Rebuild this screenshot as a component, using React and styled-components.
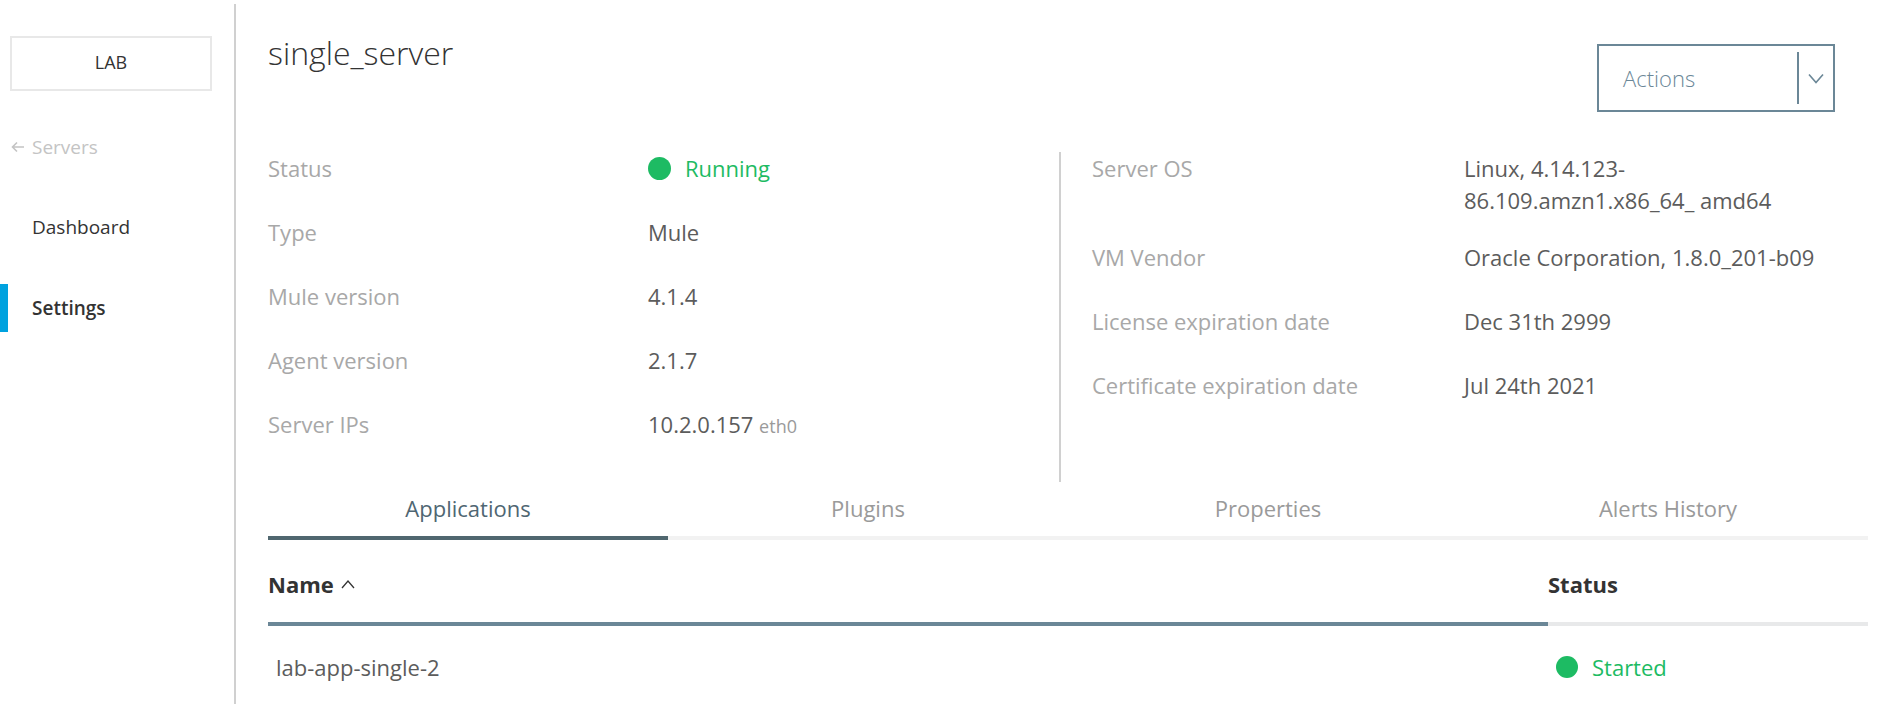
import React from 'react';
import styled, { createGlobalStyle } from 'styled-components';

const GlobalStyle = createGlobalStyle`
  html, body { margin: 0; padding: 0; background: #ffffff; }
  body {
    font-family: "Open Sans", "Liberation Sans", sans-serif;
    color: #333333;
    -webkit-font-smoothing: antialiased;
  }
  * { box-sizing: border-box; }
`;

const GREEN = '#1dbb63';
const SLATE = '#6b8797';

const Layout = styled.div`
  display: flex;
  width: 1886px;
  height: 704px;
  overflow: hidden;
`;

const Sidebar = styled.aside`
  width: 236px;
  flex: none;
  margin-top: 4px;
  border-right: 2px solid #d0d0d0;
  display: flex;
  flex-direction: column;
`;

const EnvBox = styled.div`
  margin: 32px 0 0 10px;
  width: 202px;
  height: 55px;
  padding-bottom: 4px;
  border: 2px solid #e8e8e8;
  display: flex;
  align-items: center;
  justify-content: center;
  font-size: 18px;
  color: #333333;
`;

const BackLink = styled.a`
  margin: 41px 0 0 11px;
  height: 30px;
  display: flex;
  align-items: center;
  gap: 7px;
  font-size: 19px;
  color: #c4c4c4;
  text-decoration: none;
`;

const NavList = styled.nav`
  margin-top: 41px;
  display: flex;
  flex-direction: column;
  gap: 33px;
`;

const NavItem = styled.a`
  height: 48px;
  display: flex;
  align-items: center;
  padding-left: 24px;
  border-left: 8px solid ${(p) => (p.$active ? '#00a2df' : 'transparent')};
  font-size: 19px;
  font-weight: ${(p) => (p.$active ? 600 : 400)};
  color: #333333;
  text-decoration: none;
`;

const Main = styled.main`
  flex: 1;
  padding: 33px 18px 0 32px;
  display: flex;
  flex-direction: column;
  & > * { flex-shrink: 0; }
`;

const Header = styled.div`
  display: flex;
  justify-content: space-between;
  align-items: flex-start;
`;

const Title = styled.h1`
  margin: 0;
  font-size: 32px;
  font-weight: 300;
  line-height: 40px;
  color: #333333;
`;

const ActionsButton = styled.button`
  margin: 11px 33px 0 0;
  width: 238px;
  height: 68px;
  border: 2px solid ${SLATE};
  background: #ffffff;
  display: flex;
  align-items: center;
  padding: 0;
  font-family: inherit;
  color: ${SLATE};
  cursor: pointer;
`;

const ActionsLabel = styled.span`
  flex: 1;
  text-align: left;
  padding-left: 24px;
  font-size: 22px;
  font-weight: 300;
`;

const Separator = styled.span`
  width: 2px;
  align-self: stretch;
  margin: 6px 0;
  background: ${SLATE};
`;

const ChevronBox = styled.span`
  width: 34px;
  display: flex;
  justify-content: center;
  align-items: center;
`;

const Details = styled.section`
  display: flex;
  margin-top: 40px;
  height: 330px;
`;

const InfoColumn = styled.div`
  display: flex;
  flex-direction: column;
  width: ${(p) => (p.$left ? '793px' : 'auto')};
  flex: ${(p) => (p.$left ? 'none' : '1')};
  border-right: ${(p) => (p.$left ? '2px solid #d0d0d0' : 'none')};
  padding-left: ${(p) => (p.$left ? '0' : '31px')};
`;

const InfoRow = styled.div`
  display: grid;
  grid-template-columns: ${(p) => p.$labelWidth}px 1fr;
  height: ${(p) => (p.$tall ? 89 : 64)}px;
  flex-shrink: 0;
  font-size: 22px;
  line-height: 32px;
`;

const Label = styled.span`
  color: #a8a8a8;
`;

const Value = styled.span`
  color: #5c5c5c;
`;

const StatusValue = styled.span`
  display: flex;
  align-items: center;
  gap: ${(p) => p.$gap || 14}px;
  color: ${GREEN};
  height: 32px;
`;

const Dot = styled.span`
  width: ${(p) => p.$size}px;
  height: ${(p) => p.$size}px;
  border-radius: 50%;
  background: ${GREEN};
  flex: none;
`;

const Muted = styled.span`
  font-size: 18px;
  color: #9a9a9a;
`;

const Tabs = styled.div`
  display: grid;
  grid-template-columns: repeat(4, 1fr);
`;

const Tab = styled.div`
  text-align: center;
  padding: 10px 0 12px;
  line-height: 32px;
  font-size: 22px;
  color: ${(p) => (p.$active ? '#4f6672' : '#9a9a9a')};
  border-bottom: 4px solid ${(p) => (p.$active ? '#50676f' : '#f2f2f2')};
`;

const Table = styled.div`
  display: grid;
  grid-template-columns: 1280px 320px;
`;

const HeaderCell = styled.div`
  display: flex;
  align-items: center;
  gap: 7px;
  padding: 28px 0 22px;
  line-height: 32px;
  font-size: 22px;
  font-weight: 700;
  color: #333333;
  border-bottom: 4px solid ${(p) => (p.$sorted ? SLATE : '#e8e9ea')};
`;

const BodyCell = styled.div`
  padding: 25px 8px;
  line-height: 32px;
  font-size: 22px;
  color: #5c5c5c;
`;

const ArrowLeft = () => (
  <svg width="14" height="12" viewBox="0 0 14 12" fill="none">
    <path d="M13 6H1.5M6 1.5L1.5 6L6 10.5" stroke="#c4c4c4" strokeWidth="1.6" />
  </svg>
);

const ChevronDown = () => (
  <svg width="16" height="11" viewBox="0 0 16 11" fill="none">
    <path d="M1 1.5L8 9.5L15 1.5" stroke={SLATE} strokeWidth="1.6" />
  </svg>
);

const CaretUp = () => (
  <svg width="14" height="10" viewBox="0 0 14 10" fill="none">
    <path d="M1 9L7 2L13 9" stroke="#333" strokeWidth="1.3" />
  </svg>
);

const leftRows = [
  { label: 'Status', value: <StatusValue><Dot $size={23} />Running</StatusValue> },
  { label: 'Type', value: <Value>Mule</Value> },
  { label: 'Mule version', value: <Value>4.1.4</Value> },
  { label: 'Agent version', value: <Value>2.1.7</Value> },
  { label: 'Server IPs', value: <Value>10.2.0.157 <Muted>eth0</Muted></Value> },
];

const rightRows = [
  { label: 'Server OS', tall: true, value: <Value>Linux, 4.14.123-<br />86.109.amzn1.x86_64_ amd64</Value> },
  { label: 'VM Vendor', value: <Value>Oracle Corporation, 1.8.0_201-b09</Value> },
  { label: 'License expiration date', value: <Value>Dec 31th 2999</Value> },
  { label: 'Certificate expiration date', value: <Value>Jul 24th 2021</Value> },
];

const tabs = ['Applications', 'Plugins', 'Properties', 'Alerts History'];

export default function App() {
  return (
    <>
      <GlobalStyle />
      <Layout>
        <Sidebar>
          <EnvBox>LAB</EnvBox>
          <BackLink href="#"><ArrowLeft />Servers</BackLink>
          <NavList>
            <NavItem href="#">Dashboard</NavItem>
            <NavItem href="#" $active>Settings</NavItem>
          </NavList>
        </Sidebar>
        <Main>
          <Header>
            <Title>single_server</Title>
            <ActionsButton>
              <ActionsLabel>Actions</ActionsLabel>
              <Separator />
              <ChevronBox><ChevronDown /></ChevronBox>
            </ActionsButton>
          </Header>
          <Details>
            <InfoColumn $left>
              {leftRows.map((r) => (
                <InfoRow key={r.label} $labelWidth={380}>
                  <Label>{r.label}</Label>
                  {r.value}
                </InfoRow>
              ))}
            </InfoColumn>
            <InfoColumn>
              {rightRows.map((r) => (
                <InfoRow key={r.label} $labelWidth={372} $tall={r.tall}>
                  <Label>{r.label}</Label>
                  {r.value}
                </InfoRow>
              ))}
            </InfoColumn>
          </Details>
          <Tabs>
            {tabs.map((t, i) => (
              <Tab key={t} $active={i === 0}>{t}</Tab>
            ))}
          </Tabs>
          <Table>
            <HeaderCell $sorted>Name <CaretUp /></HeaderCell>
            <HeaderCell>Status</HeaderCell>
            <BodyCell>lab-app-single-2</BodyCell>
            <BodyCell>
              <StatusValue $gap={14}><Dot $size={22} />Started</StatusValue>
            </BodyCell>
          </Table>
        </Main>
      </Layout>
    </>
  );
}
